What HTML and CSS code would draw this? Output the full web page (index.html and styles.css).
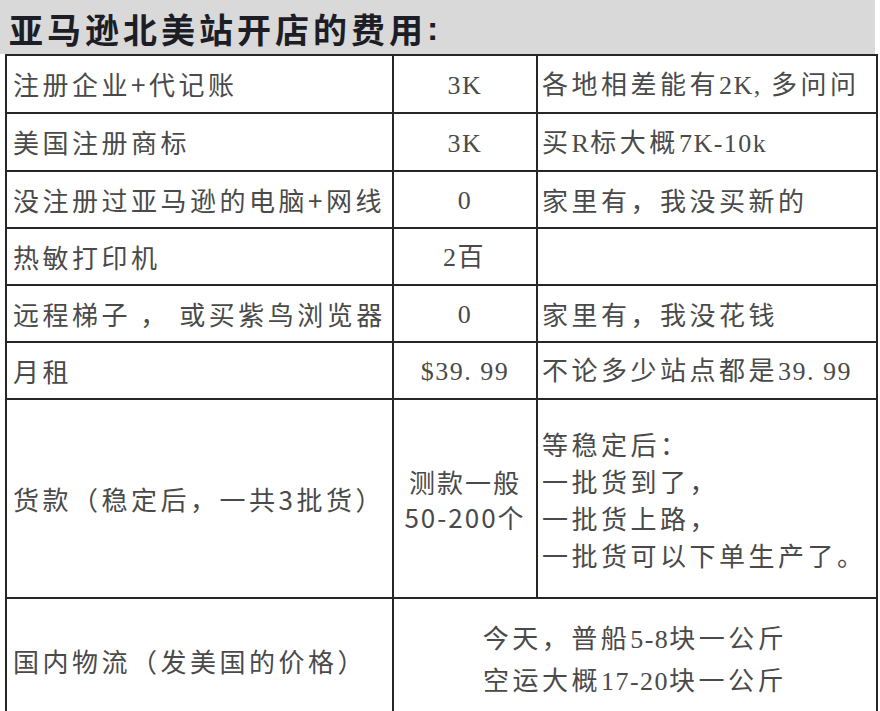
FILE: index.html
```html
<!DOCTYPE html>
<html lang="zh-CN">
<head>
<meta charset="utf-8">
<title>亚马逊北美站开店的费用</title>
<link rel="stylesheet" href="styles.css">
</head>
<body>
<div class="page">
  <div class="title">亚马逊北美站开店的费用<span class="colon">:</span></div>
  <table class="cost">
    <colgroup><col class="c1"><col class="c2"><col class="c3"></colgroup>
    <tr class="r58">
      <td class="name">注册企业+代记账</td>
      <td class="mid"><span class="lat">3K</span></td>
      <td class="note">各地相差能有<span class="lat">2K,</span> 多问问</td>
    </tr>
    <tr class="r58">
      <td class="name">美国注册商标</td>
      <td class="mid"><span class="lat">3K</span></td>
      <td class="note">买<span class="lat">R</span>标大概<span class="lat">7K-10k</span></td>
    </tr>
    <tr class="r57">
      <td class="name">没注册过亚马逊的电脑+网线</td>
      <td class="mid"><span class="lat">0</span></td>
      <td class="note">家里有，我没买新的</td>
    </tr>
    <tr class="r57">
      <td class="name">热敏打印机</td>
      <td class="mid"><span class="lat">2</span>百</td>
      <td class="note"></td>
    </tr>
    <tr class="r57">
      <td class="name">远程梯子 ， 或买紫鸟浏览器</td>
      <td class="mid"><span class="lat">0</span></td>
      <td class="note">家里有，我没花钱</td>
    </tr>
    <tr class="r57">
      <td class="name">月租</td>
      <td class="mid"><span class="lat">$39. 99</span></td>
      <td class="note">不论多少站点都是<span class="lat">39. 99</span></td>
    </tr>
    <tr class="r199">
      <td class="name">货款（稳定后，一共3批货）</td>
      <td class="mid lines2">测款一般<br>50-200个</td>
      <td class="note lines4">等稳定后：<br>一批货到了，<br>一批货上路，<br>一批货可以下单生产了。</td>
    </tr>
    <tr class="r126 thin-top">
      <td class="name">国内物流（发美国的价格）</td>
      <td class="mid lines-ship" colspan="2">今天，普船<span class="lat">5-8</span>块一公斤<br>空运大概<span class="lat">17-20</span>块一公斤</td>
    </tr>
  </table>
</div>
</body>
</html>
```

FILE: styles.css
```css
html, body {
  margin: 0;
  padding: 0;
  background: #ffffff;
}

body {
  font-family: "Noto Sans CJK SC", "Noto Sans", sans-serif;
  color: #4a4a4a;
}

.page {
  width: 880px;
}

.title {
  box-sizing: border-box;
  width: 875px;
  height: 54px;
  background: #d9d9d9;
  padding: 2px 0 0 9px;
  display: flex;
  align-items: center;
  font-size: 34px;
  font-weight: 700;
  letter-spacing: 4px;
  color: #1d1d26;
  white-space: nowrap;
}

.colon {
  font-family: "Liberation Sans", sans-serif;
  font-weight: 700;
  letter-spacing: 0;
}

.cost {
  border-collapse: collapse;
  margin-left: 5px;
  width: 871px;
  table-layout: fixed;
}

.c1 { width: 387px; }
.c2 { width: 144px; }
.c3 { width: 340px; }

.cost td {
  border: 2px solid #262626;
  padding: 0;
  font-size: 26px;
  letter-spacing: 3.5px;
  line-height: 36px;
  vertical-align: middle;
  white-space: nowrap;
  overflow: hidden;
}

.cost td.name {
  padding-left: 6px;
}

.cost td.note {
  padding-left: 4px;
}

.cost td.mid {
  text-align: center;
}

.lat {
  font-family: "Liberation Serif", serif;
  letter-spacing: 1.5px;
}

.r58 { height: 58px; }
.r57 { height: 57px; }
.r199 { height: 199px; }
.r126 { height: 126px; }

.cost td.lines2 {
  line-height: 35px;
  letter-spacing: 2px;
}

.cost td.lines4 {
  line-height: 37px;
}

.cost td.lines-ship {
  line-height: 39px;
  padding-bottom: 4px;
}

.thin-top td {
  border-top: 1px solid #555555;
}
```
